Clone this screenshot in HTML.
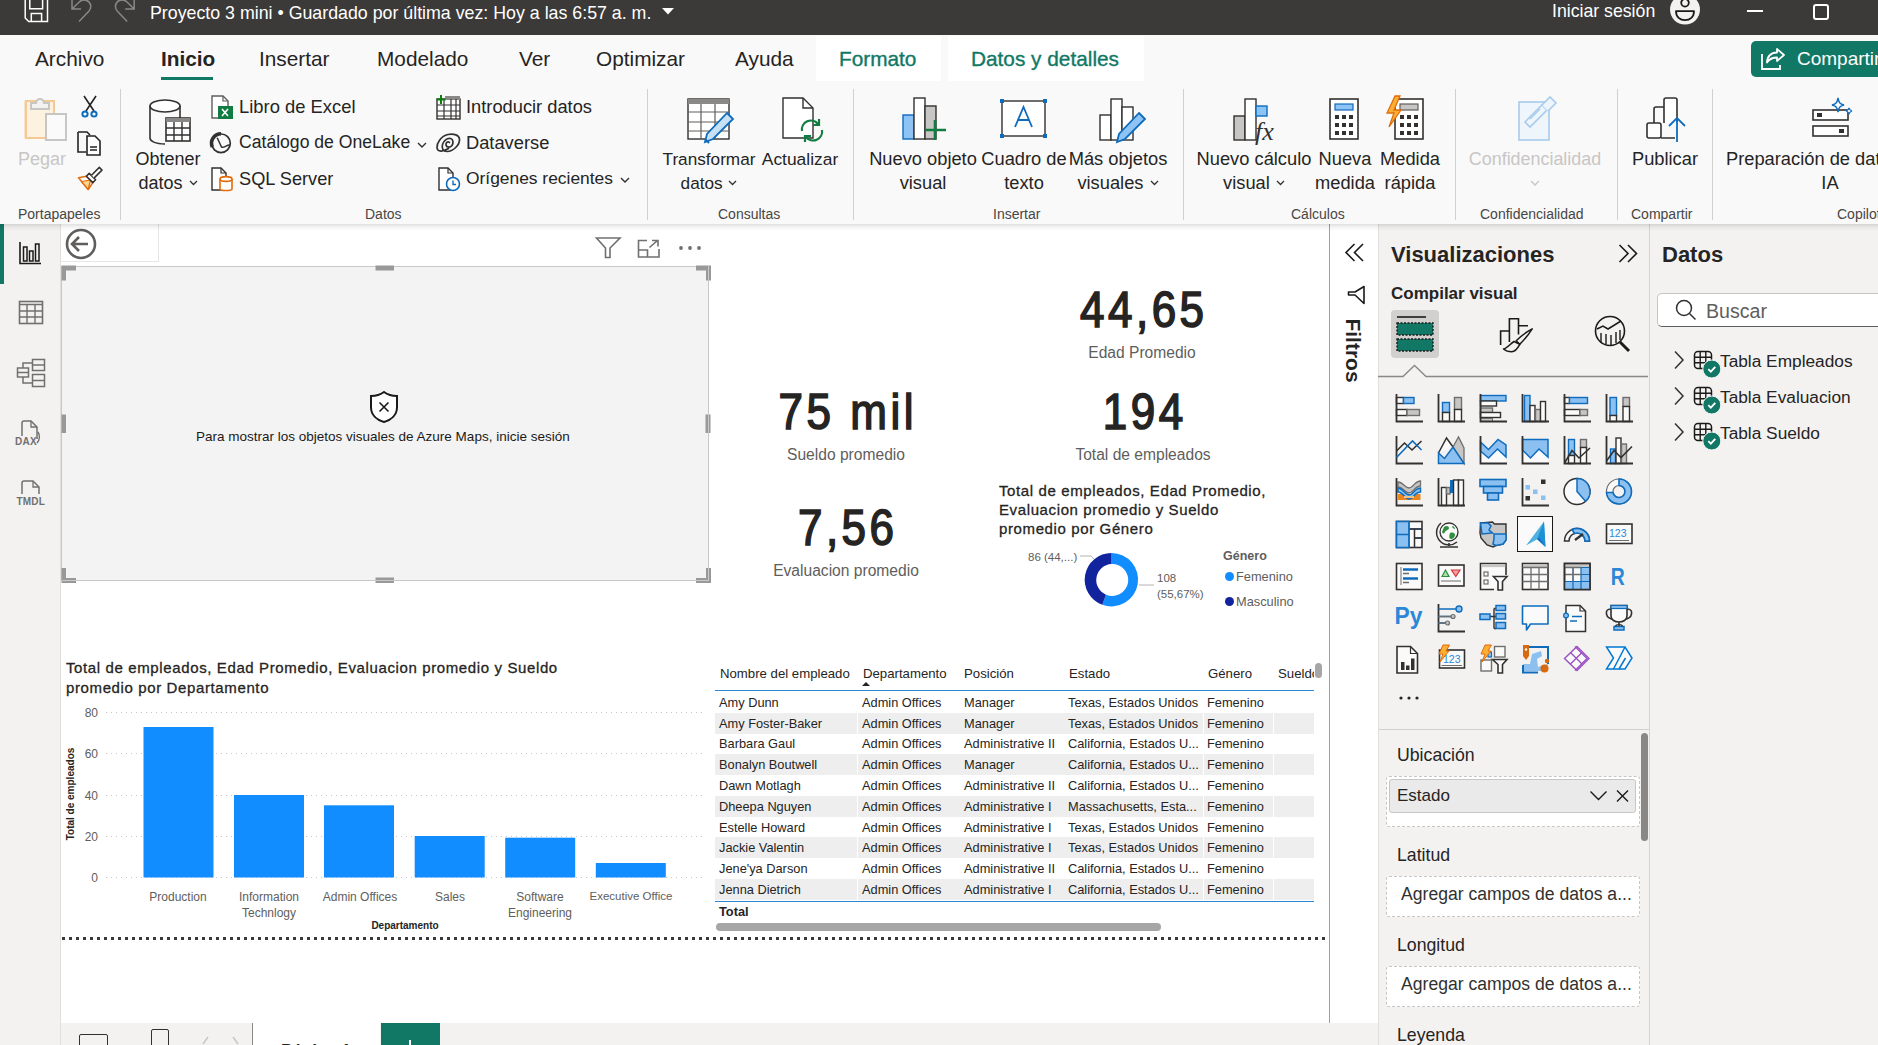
<!DOCTYPE html>
<html><head><meta charset="utf-8">
<style>
*{box-sizing:border-box;margin:0;padding:0}
html,body{width:1878px;height:1045px;overflow:hidden;background:#fff;font-family:"Liberation Sans",sans-serif;color:#252423}
.a{position:absolute}
.t{position:absolute;white-space:nowrap;line-height:1}
svg{position:absolute;overflow:visible}
#title{left:0;top:0;width:1878px;height:35px;background:#3b3a39}
#tabs{left:0;top:35px;width:1878px;height:53px;background:#f9f9f9}
#ribbon{left:0;top:88px;width:1878px;height:136px;background:#f9f9f9}
#leftnav{left:0;top:224px;width:61px;height:821px;background:#f3f2f1;border-right:1px solid #e1dfdd}
#canvas{left:61px;top:224px;width:1269px;height:799px;background:#fff}
#pagebar{left:61px;top:1023px;width:1317px;height:22px;background:#f3f2f1}
#filters{left:1329px;top:224px;width:49px;height:799px;background:#fff;border-left:1px solid #a19f9d}
#viz{left:1378px;top:224px;width:271px;height:821px;background:#f3f2f1;border-left:1px solid #e1dfdd}
#datos{left:1649px;top:224px;width:229px;height:821px;background:#f3f2f1;border-left:1px solid #d6d4d2}
.tab{position:absolute;top:49px;font-size:20.8px;color:#252423;line-height:1}
.sep{position:absolute;top:89px;width:1px;height:131px;background:#d2d0ce}
.grp{position:absolute;top:207px;font-size:14px;color:#484644;line-height:1;white-space:nowrap}
.rb{position:absolute;font-size:18px;color:#252423;line-height:24px;text-align:center;white-space:nowrap}
.rs{position:absolute;font-size:18px;color:#252423;line-height:1;white-space:nowrap}

.kpi{font-size:50px;color:#252423;letter-spacing:4px;padding-left:4px;-webkit-text-stroke:1.6px #252423;transform:scaleX(0.88)}
.klab{font-size:15.6px;color:#605e5c;margin-top:1.5px}
.vt{font-size:15px;font-weight:normal;letter-spacing:0.62px;-webkit-text-stroke:0.3px #252423;color:#252423;white-space:nowrap}
.dl{font-size:11.5px;color:#605e5c}
.ax{font-size:12px;color:#605e5c;margin-top:1px}

.td{font-size:12.8px;color:#252423}
.th{font-size:13.2px;color:#252423}

.well{font-size:17.7px;color:#252423;margin-top:1.5px}
</style></head><body>
<!-- TITLE BAR -->
<div id="title" class="a"></div>
<div class="t" style="left:150px;top:5px;font-size:17.8px;color:#fff">Proyecto 3 mini • Guardado por última vez: Hoy a las 6:57 a. m.</div>
<div class="t" style="left:1552px;top:3px;font-size:17.7px;color:#fff">Iniciar sesión</div>
<svg style="left:0;top:0" width="200" height="35" viewBox="0 0 200 35">
 <path d="M25.2 -2V18L28.7 21.5H47.5V-2M29.8 -2V8.8H42.6V-2M31.3 21.5V13.5H41.6V21.5" fill="none" stroke="#fff" stroke-width="1.5"/>
 <path d="M72 -1V9H81M72 9L79.5 1.8A6.6 6.6 0 0 1 88.8 11.2L79 21.5" fill="none" stroke="#8a8886" stroke-width="1.5"/>
 <path d="M134.2 -1V9H125.2M134.2 9L126.7 1.8A6.6 6.6 0 0 0 117.4 11.2L127.2 21.5" fill="none" stroke="#8a8886" stroke-width="1.5"/>
</svg>
<svg style="left:661px;top:7px" width="14" height="8" viewBox="0 0 14 8"><path d="M1 1h12L7 7.5z" fill="#fff"/></svg>
<svg style="left:1669px;top:0" width="32" height="27" viewBox="0 0 32 27">
 <circle cx="16" cy="9.6" r="15" fill="#f3f2f1"/>
 <circle cx="16" cy="2.8" r="3.8" fill="none" stroke="#1b1a19" stroke-width="1.8"/>
 <path d="M7 11.2H25C25 17 21 20.2 16 20.2S7 17 7 11.2z" fill="none" stroke="#1b1a19" stroke-width="1.8" stroke-linejoin="round"/>
</svg>
<div class="a" style="left:1747px;top:10.2px;width:16px;height:1.6px;background:#fff"></div>
<div class="a" style="left:1813px;top:4px;width:16px;height:16px;border:2px solid #fff;border-radius:3px"></div>


<!-- TABS -->
<div id="tabs" class="a"></div>
<div class="a" style="left:816px;top:36px;width:125px;height:45px;background:#fff"></div>
<div class="a" style="left:948px;top:36px;width:196px;height:45px;background:#fff"></div>
<div class="tab" style="left:35px">Archivo</div>
<div class="tab" style="left:161px;font-weight:bold">Inicio</div>
<div class="a" style="left:161px;top:77px;width:52px;height:3px;background:#117865"></div>
<div class="tab" style="left:259px">Insertar</div>
<div class="tab" style="left:377px">Modelado</div>
<div class="tab" style="left:519px">Ver</div>
<div class="tab" style="left:596px">Optimizar</div>
<div class="tab" style="left:735px">Ayuda</div>
<div class="tab" style="left:839px;color:#117865;-webkit-text-stroke:0.35px #117865">Formato</div>
<div class="tab" style="left:971px;color:#117865;-webkit-text-stroke:0.35px #117865">Datos y detalles</div>
<div class="a" style="left:1751px;top:41px;width:140px;height:36px;background:#117865;border-radius:5px"></div>
<div class="t" style="left:1797px;top:49px;font-size:19px;color:#fff">Compartir</div>
<svg style="left:1760px;top:47px" width="26" height="24" viewBox="0 0 26 24">
 <path d="M2 7v15h18v-4" fill="none" stroke="#fff" stroke-width="1.8"/>
 <path d="M17 2l7 6-7 6v-3.5c-5 0-8 2-10 5 0-6 4-10 10-10z" fill="none" stroke="#fff" stroke-width="1.8" stroke-linejoin="round"/>
</svg>


<!-- RIBBON -->
<div id="ribbon" class="a"></div>
<div class="sep" style="left:120px"></div>
<div class="sep" style="left:647px"></div>
<div class="sep" style="left:853px"></div>
<div class="sep" style="left:1183px"></div>
<div class="sep" style="left:1455px"></div>
<div class="sep" style="left:1617px"></div>
<div class="sep" style="left:1712px"></div>
<div class="grp" style="left:18px">Portapapeles</div>
<div class="grp" style="left:365px">Datos</div>
<div class="grp" style="left:718px">Consultas</div>
<div class="grp" style="left:993px">Insertar</div>
<div class="grp" style="left:1291px">Cálculos</div>
<div class="grp" style="left:1480px">Confidencialidad</div>
<div class="grp" style="left:1631px">Compartir</div>
<div class="grp" style="left:1837px">Copilot</div>


<!-- RIBBON CONTENT -->
<!-- Pegar -->
<svg style="left:24px;top:97px" width="44" height="48" viewBox="0 0 44 48">
 <path d="M1.5 4.5h8v36h-8z" fill="#fdf3e3" stroke="#f5cfa0" stroke-width="2"/>
 <rect x="2" y="4" width="28" height="37" fill="#fdf1df" stroke="#f4c994" stroke-width="2"/>
 <path d="M7 12v-6h5a4 4 0 0 1 8 0h5v6z" fill="#f3f2f1" stroke="#c8c6c4" stroke-width="2"/>
 <rect x="22" y="17" width="20" height="26" fill="#fafafa" stroke="#c8c6c4" stroke-width="2"/>
</svg>
<div class="rb" style="left:12px;top:147px;width:60px;font-size:18px;color:#c8c6c4">Pegar</div>
<!-- cut -->
<svg style="left:80px;top:95px" width="20" height="24" viewBox="0 0 20 24">
 <path d="M4 1l10 15M16 1L6 16" stroke="#252423" stroke-width="1.6" fill="none"/>
 <circle cx="5" cy="19" r="2.6" fill="#fff" stroke="#0f6cbd" stroke-width="2"/>
 <circle cx="14" cy="19" r="2.6" fill="#fff" stroke="#0f6cbd" stroke-width="2"/>
</svg>
<!-- copy -->
<svg style="left:77px;top:131px" width="26" height="25" viewBox="0 0 26 25">
 <path d="M1 1h9l3 3v-0M1 1v20h8" stroke="#252423" stroke-width="1.6" fill="none"/>
 <path d="M10 5h8l5 5v14H10z" fill="#fff" stroke="#252423" stroke-width="1.6"/>
 <path d="M13 16h7M13 19h7" stroke="#252423" stroke-width="1.4"/>
</svg>
<!-- painter -->
<svg style="left:77px;top:166px" width="26" height="25" viewBox="0 0 26 25">
 <path d="M9.4 10.2L1.5 11.8 11.2 23.5 15.8 16.6z" fill="#fff" stroke="#e26b0a" stroke-width="1.5" stroke-linejoin="round"/>
 <path d="M4.5 15.5L13.5 14 11.2 23.5z" fill="#fcd48a" stroke="#e26b0a" stroke-width="1.2" stroke-linejoin="round"/>
 <path d="M9.4 10.2L12.2 7.4 18.6 13.8 15.8 16.6z" fill="#fff" stroke="#323130" stroke-width="1.5" stroke-linejoin="round"/>
 <path d="M14.5 9.2L22.3 1.4 25 4.1 17.2 11.9" fill="#fff" stroke="#323130" stroke-width="1.5" stroke-linejoin="round"/>
</svg>
<!-- Obtener datos -->
<svg style="left:149px;top:98px" width="46" height="48" viewBox="0 0 46 48">
 <ellipse cx="16" cy="8" rx="15" ry="6" fill="#fff" stroke="#323130" stroke-width="1.6"/>
 <path d="M1 8v32c0 3 5 6 15 6M31 8v12" stroke="#323130" stroke-width="1.6" fill="none"/>
 <rect x="17" y="20" width="24" height="23" fill="#fff" stroke="#323130" stroke-width="1.6"/>
 <rect x="17" y="20" width="24" height="4" fill="#8a8886"/>
 <path d="M17 30h24M17 37h24M25 24v19M33 24v19" stroke="#323130" stroke-width="1.4"/>
</svg>
<div class="rb" style="left:128px;top:147px;width:80px;font-size:18px">Obtener</div>
<div class="rb" style="left:128px;top:171px;width:80px;font-size:18px">datos <svg style="position:relative;display:inline-block;vertical-align:middle;margin-left:1px;top:-1px" width="9" height="6" viewBox="0 0 9 6"><path d="M1 1l3.5 3.5L8 1" stroke="#323130" stroke-width="1.3" fill="none"/></svg></div>
<!-- Excel -->
<svg style="left:211px;top:95px" width="23" height="25" viewBox="0 0 23 25">
 <path d="M1 1h11l5 5v17H1z" fill="#fff" stroke="#605e5c" stroke-width="1.4"/>
 <path d="M12 1v5h5" fill="none" stroke="#605e5c" stroke-width="1.2"/>
 <rect x="7" y="11" width="15" height="13" fill="#107c41"/>
 <path d="M11 14l6 7M17 14l-6 7" stroke="#fff" stroke-width="1.6"/>
</svg>
<div class="rs" style="left:239px;top:98px;font-size:18.4px">Libro de Excel</div>
<!-- OneLake -->
<svg style="left:210px;top:132px" width="23" height="23" viewBox="0 0 23 23">
 <circle cx="11" cy="11.3" r="9.3" fill="none" stroke="#323130" stroke-width="1.7"/>
 <path d="M2.3 15A9.5 9.5 0 0 1 11 1.8" fill="none" stroke="#323130" stroke-width="3.6"/>
 <path d="M7.2 5.8L11.5 15C14 16.5 16.5 12.5 20.3 13" fill="none" stroke="#323130" stroke-width="1.5"/>
</svg>
<div class="rs" style="left:239px;top:134px;font-size:17.6px">Catálogo de OneLake</div>
<svg style="left:417px;top:142px" width="10" height="6" viewBox="0 0 10 6"><path d="M1 1l4 4 4-4" stroke="#323130" stroke-width="1.4" fill="none"/></svg>
<!-- SQL -->
<svg style="left:211px;top:167px" width="23" height="25" viewBox="0 0 23 25">
 <path d="M1 1h9l5 5v17H1z" fill="#fff" stroke="#323130" stroke-width="1.4"/>
 <path d="M10 1v5h5" fill="none" stroke="#323130" stroke-width="1.2"/>
 <path d="M9 12v10c0 2 12 2 12 0V12" fill="#fff" stroke="#e26b0a" stroke-width="1.6"/>
 <ellipse cx="15" cy="12" rx="6" ry="2.4" fill="#fff" stroke="#e26b0a" stroke-width="1.6"/>
</svg>
<div class="rs" style="left:239px;top:170px;font-size:18.2px">SQL Server</div>
<!-- Introducir datos -->
<svg style="left:436px;top:95px" width="25" height="25" viewBox="0 0 25 25">
 <rect x="1" y="4" width="23" height="20" fill="#fff" stroke="#323130" stroke-width="1.4"/>
 <rect x="9" y="1" width="15" height="4" fill="#8a8886"/>
 <path d="M1 10h23M1 16h23M1 21h23M8 4v20M15 4v20M20 4v20" stroke="#323130" stroke-width="1.2"/>
 <path d="M5 0v9M0.5 4.5h9" stroke="#107c10" stroke-width="2" />
</svg>
<div class="rs" style="left:466px;top:98px;font-size:18.3px">Introducir datos</div>
<!-- Dataverse -->
<svg style="left:436px;top:133px" width="25" height="21" viewBox="0 0 25 21">
 <path d="M12.5 15.5C7 19 1.5 19 1 15 0.5 10 5 3 12 1.5 18 0.5 23 2 23.5 6 24 12 17 18.5 11 18.5 7 18.5 5.5 15 6.5 11.5 7.5 7.5 11 5 14.5 5.5 17.5 6.5 17.5 10 16 12.5 14 15 10.5 14.5 10 12 9.5 9.5 12 8 13.5 9.5" fill="none" stroke="#323130" stroke-width="1.7" stroke-linecap="round"/>
</svg>
<div class="rs" style="left:466px;top:134px;font-size:18.3px">Dataverse</div>
<!-- Orígenes recientes -->
<svg style="left:438px;top:167px" width="24" height="25" viewBox="0 0 24 25">
 <path d="M1 1h9l5 5v17H1z" fill="#fff" stroke="#323130" stroke-width="1.4"/>
 <path d="M10 1v5h5" fill="none" stroke="#323130" stroke-width="1.2"/>
 <circle cx="15" cy="17" r="6.5" fill="#fff" stroke="#0f6cbd" stroke-width="1.6"/>
 <path d="M15 13.5v4h3" stroke="#0f6cbd" stroke-width="1.4" fill="none"/>
</svg>
<div class="rs" style="left:466px;top:170px;font-size:17.4px">Orígenes recientes</div>
<svg style="left:620px;top:177px" width="10" height="6" viewBox="0 0 10 6"><path d="M1 1l4 4 4-4" stroke="#323130" stroke-width="1.4" fill="none"/></svg>
<!-- Transformar datos -->
<svg style="left:687px;top:98px" width="48" height="47" viewBox="0 0 48 47">
 <rect x="1" y="1" width="41" height="40" fill="#fff" stroke="#323130" stroke-width="1.4"/>
 <rect x="1" y="1" width="41" height="5" fill="#8a8886"/>
 <path d="M1 14h41M1 24h41M1 33h41M14 6v35M28 6v35" stroke="#605e5c" stroke-width="1.2"/>
 <path d="M40 15l6 6-20 20-8 3 2-8z" fill="#c7e0f4" stroke="#0f6cbd" stroke-width="1.8"/>
 <path d="M18 41l4 4" stroke="#0f6cbd" stroke-width="2"/>
</svg>
<div class="rb" style="left:659px;top:147px;width:100px;font-size:17.2px">Transformar</div>
<div class="rb" style="left:659px;top:171px;width:100px;font-size:17.2px">datos <svg style="position:relative;display:inline-block;vertical-align:middle;margin-left:1px;top:-1px" width="9" height="6" viewBox="0 0 9 6"><path d="M1 1l3.5 3.5L8 1" stroke="#323130" stroke-width="1.3" fill="none"/></svg></div>
<!-- Actualizar -->
<svg style="left:782px;top:97px" width="46" height="48" viewBox="0 0 46 48">
 <path d="M1 1h20l10 10v30H1z" fill="#fff" stroke="#323130" stroke-width="1.4"/>
 <path d="M21 1v10h10" fill="none" stroke="#323130" stroke-width="1.4"/>
 <path d="M20 34a9 9 0 0 1 16-7M40 33a9 9 0 0 1-16 7" fill="none" stroke="#107c41" stroke-width="2.2"/>
 <path d="M37 22v6h-6M23 45v-6h6" fill="none" stroke="#107c41" stroke-width="2.2"/>
</svg>
<div class="rb" style="left:755px;top:147px;width:90px;font-size:17.4px">Actualizar</div>
<!-- Nuevo objeto visual -->
<svg style="left:902px;top:97px" width="46" height="46" viewBox="0 0 46 46">
 <rect x="1" y="18" width="11" height="24" fill="#8ec3f5" stroke="#0f6cbd" stroke-width="1.4"/>
 <rect x="12" y="1" width="11" height="41" fill="#fff" stroke="#323130" stroke-width="1.4"/>
 <rect x="23" y="9" width="11" height="33" fill="#c8c6c4" stroke="#323130" stroke-width="1.4"/>
 <path d="M33 23v20M23 33h21" stroke="#107c41" stroke-width="2.6"/>
</svg>
<div class="rb" style="left:863px;top:147px;width:120px;font-size:18.3px">Nuevo objeto</div>
<div class="rb" style="left:863px;top:171px;width:120px;font-size:18.3px">visual</div>
<!-- Cuadro de texto -->
<svg style="left:1000px;top:99px" width="48" height="40" viewBox="0 0 48 40">
 <rect x="2" y="2" width="43" height="35" fill="#fff" stroke="#323130" stroke-width="1.4"/>
 <rect x="0" y="0" width="4" height="4" fill="#0f6cbd"/><rect x="43" y="0" width="4" height="4" fill="#0f6cbd"/>
 <rect x="0" y="35" width="4" height="4" fill="#0f6cbd"/><rect x="43" y="35" width="4" height="4" fill="#0f6cbd"/>
 <path d="M15 28l8.5-20 8.5 20M18 21h11" fill="none" stroke="#0f6cbd" stroke-width="1.8"/>
</svg>
<div class="rb" style="left:974px;top:147px;width:100px;font-size:18.3px">Cuadro de</div>
<div class="rb" style="left:974px;top:171px;width:100px;font-size:18.3px">texto</div>
<!-- Más objetos visuales -->
<svg style="left:1099px;top:98px" width="46" height="48" viewBox="0 0 46 48">
 <rect x="1" y="17" width="11" height="25" fill="#fff" stroke="#323130" stroke-width="1.4"/>
 <rect x="12" y="1" width="11" height="41" fill="#fff" stroke="#323130" stroke-width="1.4"/>
 <rect x="23" y="9" width="11" height="33" fill="#fff" stroke="#323130" stroke-width="1.4"/>
 <path d="M40 15l6 6-20 20-8 3 2-8z" fill="#8ec3f5" stroke="#0f6cbd" stroke-width="1.8"/>
</svg>
<div class="rb" style="left:1063px;top:147px;width:110px;font-size:18.3px">Más objetos</div>
<div class="rb" style="left:1063px;top:171px;width:110px;font-size:18.3px">visuales <svg style="position:relative;display:inline-block;vertical-align:middle;margin-left:1px;top:-1px" width="9" height="6" viewBox="0 0 9 6"><path d="M1 1l3.5 3.5L8 1" stroke="#323130" stroke-width="1.3" fill="none"/></svg></div>
<!-- Nuevo calculo visual -->
<svg style="left:1233px;top:98px" width="46" height="46" viewBox="0 0 46 46">
 <rect x="1" y="18" width="11" height="24" fill="#c8c6c4" stroke="#323130" stroke-width="1.4"/>
 <rect x="12" y="1" width="11" height="41" fill="#fff" stroke="#323130" stroke-width="1.4"/>
 <rect x="23" y="8" width="11" height="10" fill="#8ec3f5" stroke="#0f6cbd" stroke-width="1.4"/>
 <text x="22" y="42" font-family="Liberation Serif" font-style="italic" font-size="26" fill="#323130">fx</text>
</svg>
<div class="rb" style="left:1191px;top:147px;width:126px;font-size:18.3px">Nuevo cálculo</div>
<div class="rb" style="left:1191px;top:171px;width:126px;font-size:18.3px">visual <svg style="position:relative;display:inline-block;vertical-align:middle;margin-left:1px;top:-1px" width="9" height="6" viewBox="0 0 9 6"><path d="M1 1l3.5 3.5L8 1" stroke="#323130" stroke-width="1.3" fill="none"/></svg></div>
<!-- Nueva medida -->
<svg style="left:1329px;top:98px" width="31" height="42" viewBox="0 0 31 42">
 <rect x="1" y="1" width="28" height="40" fill="#fff" stroke="#323130" stroke-width="1.6"/>
 <rect x="6" y="6" width="18" height="6" fill="#8ec3f5" stroke="#0f6cbd" stroke-width="1.2"/>
 <g fill="#323130"><rect x="6" y="17" width="4" height="4"/><rect x="13" y="17" width="4" height="4"/><rect x="20" y="17" width="4" height="4"/><rect x="6" y="25" width="4" height="4"/><rect x="13" y="25" width="4" height="4"/><rect x="20" y="25" width="4" height="4"/><rect x="6" y="33" width="4" height="4"/><rect x="13" y="33" width="4" height="4"/><rect x="20" y="33" width="4" height="4"/></g>
</svg>
<div class="rb" style="left:1310px;top:147px;width:70px;font-size:18.3px">Nueva</div>
<div class="rb" style="left:1310px;top:171px;width:70px;font-size:18.3px">medida</div>
<!-- Medida rapida -->
<svg style="left:1385px;top:95px" width="40" height="46" viewBox="0 0 40 46">
 <rect x="10" y="4" width="28" height="40" fill="#fff" stroke="#323130" stroke-width="1.6"/>
 <rect x="15" y="9" width="18" height="6" fill="#c8c6c4" stroke="#605e5c" stroke-width="1.2"/>
 <g fill="#323130"><rect x="15" y="20" width="4" height="4"/><rect x="22" y="20" width="4" height="4"/><rect x="29" y="20" width="4" height="4"/><rect x="15" y="28" width="4" height="4"/><rect x="22" y="28" width="4" height="4"/><rect x="29" y="28" width="4" height="4"/><rect x="15" y="36" width="4" height="4"/><rect x="22" y="36" width="4" height="4"/><rect x="29" y="36" width="4" height="4"/></g>
 <path d="M10 1L2 18h7l-5 14 12-17H9l6-14z" fill="#fbb034" stroke="#e26b0a" stroke-width="1.3"/>
</svg>
<div class="rb" style="left:1370px;top:147px;width:80px;font-size:18.3px">Medida</div>
<div class="rb" style="left:1370px;top:171px;width:80px;font-size:18.3px">rápida</div>
<!-- Confidencialidad -->
<svg style="left:1518px;top:95px" width="44" height="46" viewBox="0 0 44 46">
 <rect x="1" y="7" width="30" height="38" fill="#eef5fb" stroke="#a7cbed" stroke-width="1.6"/>
 <path d="M7 27l17-17 5 5-17 17z" fill="none" stroke="#a7cbed" stroke-width="1.6"/>
 <path d="M24 10l8-8 6 6-8 8" fill="#eef5fb" stroke="#a7cbed" stroke-width="1.6"/>
 <path d="M12 24l10-10" stroke="#a7cbed" stroke-width="1.4"/>
</svg>
<div class="rb" style="left:1460px;top:147px;width:150px;font-size:17.9px;color:#c8c6c4">Confidencialidad</div>
<svg style="left:1530px;top:180px" width="10" height="6" viewBox="0 0 10 6"><path d="M1 1l4 4 4-4" stroke="#c8c6c4" stroke-width="1.4" fill="none"/></svg>
<!-- Publicar -->
<svg style="left:1646px;top:97px" width="44" height="46" viewBox="0 0 44 46">
 <rect x="1" y="26" width="14" height="15" rx="2" fill="#fff" stroke="#323130" stroke-width="1.6"/>
 <path d="M8 26V12a2 2 0 0 1 2-2h8M15 41h14" fill="none" stroke="#323130" stroke-width="1.6"/>
 <path d="M18 26V3a2 2 0 0 1 2-2h9a2 2 0 0 1 2 2v22" fill="#fff" stroke="#323130" stroke-width="1.6"/>
 <path d="M31 45V21M23 29l8-8 8 8" fill="none" stroke="#0f6cbd" stroke-width="1.8"/>
</svg>
<div class="rb" style="left:1625px;top:147px;width:80px;font-size:18.3px">Publicar</div>
<!-- Preparación IA -->
<svg style="left:1812px;top:97px" width="42" height="40" viewBox="0 0 42 40">
 <rect x="1" y="13" width="35" height="10" fill="#fff" stroke="#323130" stroke-width="1.6"/>
 <rect x="1" y="29" width="35" height="10" fill="#fff" stroke="#323130" stroke-width="1.6"/>
 <rect x="5" y="16" width="5" height="4" fill="#323130"/><rect x="27" y="32" width="5" height="4" fill="#323130"/>
 <path d="M26 1c1 5 2 6 6 7-4 1-5 2-6 7-1-5-2-6-6-7 4-1 5-2 6-7z" fill="#fff" stroke="#0f6cbd" stroke-width="1.4"/>
 <path d="M37 11c.5 2 1 2.5 3 3-2 .5-2.5 1-3 3-.5-2-1-2.5-3-3 2-.5 2.5-1 3-3z" fill="#fff" stroke="#0f6cbd" stroke-width="1.2"/>
</svg>
<div class="rs" style="left:1726px;top:150px;font-size:18.3px">Preparación de datos para</div>
<div class="rb" style="left:1810px;top:171px;width:40px;font-size:18.3px">IA</div>

<!-- LEFT NAV -->
<div id="leftnav" class="a"></div>
<div class="a" style="left:0;top:224px;width:4px;height:60px;background:#117865"></div>
<svg style="left:19px;top:242px" width="24" height="23" viewBox="0 0 24 23">
 <path d="M1 0v21.5h21" fill="none" stroke="#1b1a19" stroke-width="1.6"/>
 <rect x="4.5" y="5" width="3.5" height="14" fill="none" stroke="#1b1a19" stroke-width="1.5"/>
 <rect x="10.5" y="9" width="3.5" height="10" fill="none" stroke="#1b1a19" stroke-width="1.5"/>
 <rect x="16.5" y="2" width="3.5" height="17" fill="none" stroke="#1b1a19" stroke-width="1.5"/>
</svg>
<svg style="left:18px;top:300px" width="26" height="25" viewBox="0 0 26 25">
 <rect x="1.5" y="1.5" width="23" height="22" fill="none" stroke="#707070" stroke-width="1.6"/>
 <path d="M1.5 4.5h23M1.5 11h23M1.5 17h23M9 4.5v19M17 4.5v19" stroke="#707070" stroke-width="1.4"/>
</svg>
<svg style="left:16px;top:358px" width="30" height="30" viewBox="0 0 30 30">
 <g fill="none" stroke="#707070" stroke-width="1.5">
  <rect x="1.5" y="10" width="11" height="9"/><path d="M1.5 14.5h11"/>
  <rect x="16.5" y="1.5" width="12" height="11"/><path d="M16.5 7h12"/>
  <rect x="16.5" y="16.5" width="12" height="12"/><path d="M16.5 22.5h12"/>
  <path d="M7 10V5h9.5M7 19v6h9.5"/>
 </g>
</svg>
<svg style="left:14px;top:420px" width="30" height="28" viewBox="0 0 30 28">
 <path d="M8 16V3a2 2 0 0 1 2-2h7l6 6v12" fill="none" stroke="#707070" stroke-width="1.5"/>
 <path d="M17 1v6h6" fill="none" stroke="#707070" stroke-width="1.3"/>
 <path d="M24 12c2 3 2 8-1 11" fill="none" stroke="#707070" stroke-width="1.4"/>
 <text x="1" y="25" font-family="Liberation Sans" font-weight="bold" font-size="10" fill="#707070" letter-spacing="0.3">DAX</text>
</svg>
<svg style="left:16px;top:480px" width="30" height="28" viewBox="0 0 30 28">
 <path d="M6 14V3a2 2 0 0 1 2-2h9l6 6v7" fill="none" stroke="#707070" stroke-width="1.5"/>
 <path d="M17 1v6h6" fill="none" stroke="#707070" stroke-width="1.3"/>
 <text x="0.5" y="25" font-family="Liberation Sans" font-weight="bold" font-size="10" fill="#707070" letter-spacing="0.2">TMDL</text>
</svg>


<!-- CANVAS -->
<div id="canvas" class="a"></div>
<div id="pagebar" class="a"></div>

<!-- CANVAS CONTENT -->
<div class="a" style="left:61px;top:224px;width:98px;height:38px;border:1px solid #e6e6e6;border-top:none;border-left:none;background:#fff"></div>
<svg style="left:65px;top:228px" width="32" height="32" viewBox="0 0 32 32">
 <circle cx="16" cy="16" r="14" fill="none" stroke="#605e5c" stroke-width="2.6"/>
 <path d="M23 16H8M14 9l-7 7 7 7" fill="none" stroke="#605e5c" stroke-width="2.6"/>
</svg>
<!-- visual header -->
<svg style="left:595px;top:236px" width="27" height="24" viewBox="0 0 27 24">
 <path d="M1.5 2h23.5l-10 10v9.5h-4.5V12z" fill="none" stroke="#707070" stroke-width="1.6"/>
</svg>
<svg style="left:637px;top:239px" width="24" height="20" viewBox="0 0 24 20">
 <path d="M10 1.5H1.5v16.5h20.5V10M1.5 11h9v7" fill="none" stroke="#707070" stroke-width="1.6"/>
 <path d="M12.5 8.5l8-7M15 1.5h6v6" fill="none" stroke="#707070" stroke-width="1.6"/>
</svg>
<svg style="left:677px;top:244px" width="26" height="8" viewBox="0 0 26 8">
 <circle cx="4" cy="4" r="1.9" fill="#707070"/><circle cx="13" cy="4" r="1.9" fill="#707070"/><circle cx="22" cy="4" r="1.9" fill="#707070"/>
</svg>
<!-- map visual -->
<div class="a" style="left:61px;top:266px;width:648px;height:315px;background:#f3f3f3;border:1px solid #c8c8c8"></div>
<svg style="left:0;top:0" width="720" height="600" viewBox="0 0 720 600">
 <g fill="#999">
  <path d="M61.5 265.5h14.5v5h-10v10h-4.5z"/>
  <path d="M711 265.5h-15v5h10v10h5z"/>
  <path d="M61.5 583h14.5v-5h-10v-10h-4.5z"/>
  <path d="M711 583h-15v-5h10v-10h5z"/>
  <rect x="375.5" y="265.5" width="18.5" height="5"/>
  <rect x="375.5" y="577.5" width="18.5" height="5.5"/>
  <rect x="61.5" y="414.5" width="4.5" height="18.5"/>
  <rect x="705.5" y="414.5" width="5" height="18.5"/>
 </g>
 <path d="M61.5 580.5H709M708.5 266v315" stroke="#c8c8c8" stroke-width="1" fill="none"/>
</svg>
<svg style="left:368px;top:390px" width="32" height="34" viewBox="0 0 32 34">
 <path d="M16 2c4 3 8 4 13 4v11c0 8-6 13-13 15C9 30 3 25 3 17V6c5 0 9-1 13-4z" fill="#fff" stroke="#1b1a19" stroke-width="2"/>
 <path d="M11.5 12.5l9 9M20.5 12.5l-9 9" stroke="#1b1a19" stroke-width="1.6"/>
</svg>
<div class="t" style="left:196px;top:430px;font-size:13.5px;color:#1b1a19">Para mostrar los objetos visuales de Azure Maps, inicie sesión</div>

<!-- KPI cards -->
<div class="t kpi" style="left:1042px;top:285px;width:200px;text-align:center">44,65</div>
<div class="t klab" style="left:1042px;top:343px;width:200px;text-align:center">Edad Promedio</div>
<div class="t kpi" style="left:746px;top:387px;width:200px;text-align:center">75 mil</div>
<div class="t klab" style="left:746px;top:445px;width:200px;text-align:center">Sueldo promedio</div>
<div class="t kpi" style="left:1043px;top:387px;width:200px;text-align:center">194</div>
<div class="t klab" style="left:1043px;top:445px;width:200px;text-align:center">Total de empleados</div>
<div class="t kpi" style="left:746px;top:503px;width:200px;text-align:center">7,56</div>
<div class="t klab" style="left:746px;top:561px;width:200px;text-align:center">Evaluacion promedio</div>

<!-- donut -->
<div class="a vt" style="left:999px;top:481px;width:300px;line-height:19px">Total de empleados, Edad Promedio,<br>Evaluacion promedio y Sueldo<br>promedio por Género</div>
<svg style="left:1020px;top:545px" width="290" height="70" viewBox="1020 545 290 70">
 <path d="M1111.5 553 A26.7 26.7 0 1 1 1102.3 604.8 L1106 594.7 A16 16 0 1 0 1111.5 564z" fill="#118dff"/>
 <path d="M1102.3 604.8 A26.7 26.7 0 0 1 1111.5 553 L1111.5 564 A16 16 0 0 0 1106 594.7z" fill="#12239e"/>
 <path d="M1080 556h11l3 3" fill="none" stroke="#b3b3b3" stroke-width="1"/>
 <path d="M1139 585h15" fill="none" stroke="#b3b3b3" stroke-width="1"/>
 <circle cx="1229.5" cy="576.5" r="4.5" fill="#118dff"/>
 <circle cx="1229.5" cy="601.5" r="4.5" fill="#12239e"/>
</svg>
<div class="t dl" style="left:1028px;top:552px">86 (44,...)</div>
<div class="t dl" style="left:1157px;top:572.5px">108</div>
<div class="t dl" style="left:1157px;top:588.5px">(55,67%)</div>
<div class="t" style="left:1223px;top:550px;font-size:12.5px;font-weight:bold;color:#605e5c">Género</div>
<div class="t" style="left:1236px;top:571px;font-size:12.8px;color:#605e5c">Femenino</div>
<div class="t" style="left:1236px;top:596px;font-size:12.8px;color:#605e5c">Masculino</div>

<!-- bar chart -->
<div class="a vt" style="left:66px;top:658px;width:560px;line-height:20px">Total de empleados, Edad Promedio, Evaluacion promedio y Sueldo<br>promedio por Departamento</div>
<svg style="left:60px;top:700px" width="660" height="240" viewBox="60 700 660 240">
 <g stroke="#c8c8c8" stroke-width="1" stroke-dasharray="1 4">
  <path d="M106 712.5H703M106 753.5H703M106 795.5H703M106 836.5H703M106 877.5H703"/>
 </g>
 <g fill="#118dff">
  <rect x="143.5" y="727" width="70" height="150.5"/>
  <rect x="234" y="795" width="70" height="82.5"/>
  <rect x="324" y="805.3" width="70" height="72.2"/>
  <rect x="414.7" y="836" width="70" height="41.5"/>
  <rect x="505.2" y="837.7" width="70" height="39.8"/>
  <rect x="595.8" y="863" width="70" height="14.5"/>
 </g>
</svg>
<div class="t ax" style="left:70px;top:706px;width:28px;text-align:right">80</div>
<div class="t ax" style="left:70px;top:747px;width:28px;text-align:right">60</div>
<div class="t ax" style="left:70px;top:789px;width:28px;text-align:right">40</div>
<div class="t ax" style="left:70px;top:830px;width:28px;text-align:right">20</div>
<div class="t ax" style="left:70px;top:871px;width:28px;text-align:right">0</div>
<div class="t" style="left:-2px;top:789px;width:146px;text-align:center;font-size:10px;font-weight:bold;color:#252423;transform:rotate(-90deg)">Total de empleados</div>
<div class="t ax" style="left:128px;top:890px;width:100px;text-align:center">Production</div>
<div class="t ax" style="left:219px;top:888px;width:100px;text-align:center;line-height:16px">Information<br>Technlogy</div>
<div class="t ax" style="left:310px;top:890px;width:100px;text-align:center">Admin Offices</div>
<div class="t ax" style="left:400px;top:890px;width:100px;text-align:center">Sales</div>
<div class="t ax" style="left:490px;top:888px;width:100px;text-align:center;line-height:16px">Software<br>Engineering</div>
<div class="t ax" style="left:581px;top:890px;width:100px;text-align:center;font-size:11.5px">Executive Office</div>
<div class="t" style="left:355px;top:921px;width:100px;text-align:center;font-size:10px;font-weight:bold;color:#252423">Departamento</div>
<div class="a" style="left:62px;top:937px;width:1268px;height:3px;background:repeating-linear-gradient(90deg,#3b3a39 0 3px,transparent 3px 7px)"></div>


<!-- TABLE -->
<div class="t td" style="left:719px;top:697.0px">Amy Dunn</div>
<div class="t td" style="left:862px;top:697.0px">Admin Offices</div>
<div class="t td" style="left:964px;top:697.0px">Manager</div>
<div class="t td" style="left:1068px;top:697.0px">Texas, Estados Unidos</div>
<div class="t td" style="left:1207px;top:697.0px">Femenino</div>
<div class="a" style="left:715px;top:712.5px;width:599px;height:21px;background:#eeeeee"></div>
<div class="a" style="left:857px;top:712.5px;width:1px;height:21px;background:#fff"></div>
<div class="a" style="left:1203px;top:712.5px;width:1px;height:21px;background:#fff"></div>
<div class="a" style="left:1273px;top:712.5px;width:1px;height:21px;background:#fff"></div>
<div class="t td" style="left:719px;top:717.5px">Amy Foster-Baker</div>
<div class="t td" style="left:862px;top:717.5px">Admin Offices</div>
<div class="t td" style="left:964px;top:717.5px">Manager</div>
<div class="t td" style="left:1068px;top:717.5px">Texas, Estados Unidos</div>
<div class="t td" style="left:1207px;top:717.5px">Femenino</div>
<div class="t td" style="left:719px;top:738.3px">Barbara Gaul</div>
<div class="t td" style="left:862px;top:738.3px">Admin Offices</div>
<div class="t td" style="left:964px;top:738.3px">Administrative II</div>
<div class="t td" style="left:1068px;top:738.3px">California, Estados U...</div>
<div class="t td" style="left:1207px;top:738.3px">Femenino</div>
<div class="a" style="left:715px;top:754.0px;width:599px;height:21px;background:#eeeeee"></div>
<div class="a" style="left:857px;top:754.0px;width:1px;height:21px;background:#fff"></div>
<div class="a" style="left:1203px;top:754.0px;width:1px;height:21px;background:#fff"></div>
<div class="a" style="left:1273px;top:754.0px;width:1px;height:21px;background:#fff"></div>
<div class="t td" style="left:719px;top:759.0px">Bonalyn Boutwell</div>
<div class="t td" style="left:862px;top:759.0px">Admin Offices</div>
<div class="t td" style="left:964px;top:759.0px">Manager</div>
<div class="t td" style="left:1068px;top:759.0px">California, Estados U...</div>
<div class="t td" style="left:1207px;top:759.0px">Femenino</div>
<div class="t td" style="left:719px;top:780.0px">Dawn Motlagh</div>
<div class="t td" style="left:862px;top:780.0px">Admin Offices</div>
<div class="t td" style="left:964px;top:780.0px">Administrative II</div>
<div class="t td" style="left:1068px;top:780.0px">California, Estados U...</div>
<div class="t td" style="left:1207px;top:780.0px">Femenino</div>
<div class="a" style="left:715px;top:795.8px;width:599px;height:21px;background:#eeeeee"></div>
<div class="a" style="left:857px;top:795.8px;width:1px;height:21px;background:#fff"></div>
<div class="a" style="left:1203px;top:795.8px;width:1px;height:21px;background:#fff"></div>
<div class="a" style="left:1273px;top:795.8px;width:1px;height:21px;background:#fff"></div>
<div class="t td" style="left:719px;top:800.8px">Dheepa Nguyen</div>
<div class="t td" style="left:862px;top:800.8px">Admin Offices</div>
<div class="t td" style="left:964px;top:800.8px">Administrative I</div>
<div class="t td" style="left:1068px;top:800.8px">Massachusetts, Esta...</div>
<div class="t td" style="left:1207px;top:800.8px">Femenino</div>
<div class="t td" style="left:719px;top:821.5px">Estelle Howard</div>
<div class="t td" style="left:862px;top:821.5px">Admin Offices</div>
<div class="t td" style="left:964px;top:821.5px">Administrative I</div>
<div class="t td" style="left:1068px;top:821.5px">Texas, Estados Unidos</div>
<div class="t td" style="left:1207px;top:821.5px">Femenino</div>
<div class="a" style="left:715px;top:837.2px;width:599px;height:21px;background:#eeeeee"></div>
<div class="a" style="left:857px;top:837.2px;width:1px;height:21px;background:#fff"></div>
<div class="a" style="left:1203px;top:837.2px;width:1px;height:21px;background:#fff"></div>
<div class="a" style="left:1273px;top:837.2px;width:1px;height:21px;background:#fff"></div>
<div class="t td" style="left:719px;top:842.2px">Jackie Valentin</div>
<div class="t td" style="left:862px;top:842.2px">Admin Offices</div>
<div class="t td" style="left:964px;top:842.2px">Administrative I</div>
<div class="t td" style="left:1068px;top:842.2px">Texas, Estados Unidos</div>
<div class="t td" style="left:1207px;top:842.2px">Femenino</div>
<div class="t td" style="left:719px;top:863.0px">Jene'ya Darson</div>
<div class="t td" style="left:862px;top:863.0px">Admin Offices</div>
<div class="t td" style="left:964px;top:863.0px">Administrative II</div>
<div class="t td" style="left:1068px;top:863.0px">California, Estados U...</div>
<div class="t td" style="left:1207px;top:863.0px">Femenino</div>
<div class="a" style="left:715px;top:878.7px;width:599px;height:21px;background:#eeeeee"></div>
<div class="a" style="left:857px;top:878.7px;width:1px;height:21px;background:#fff"></div>
<div class="a" style="left:1203px;top:878.7px;width:1px;height:21px;background:#fff"></div>
<div class="a" style="left:1273px;top:878.7px;width:1px;height:21px;background:#fff"></div>
<div class="t td" style="left:719px;top:883.7px">Jenna Dietrich</div>
<div class="t td" style="left:862px;top:883.7px">Admin Offices</div>
<div class="t td" style="left:964px;top:883.7px">Administrative I</div>
<div class="t td" style="left:1068px;top:883.7px">California, Estados U...</div>
<div class="t td" style="left:1207px;top:883.7px">Femenino</div>
<div class="t th" style="left:720px;top:667px">Nombre del empleado</div>
<div class="t th" style="left:863px;top:667px">Departamento</div>
<div class="t th" style="left:964px;top:667px">Posición</div>
<div class="t th" style="left:1069px;top:667px">Estado</div>
<div class="t th" style="left:1208px;top:667px">Género</div>
<div class="a" style="left:1278px;top:667px;width:36px;height:16px;overflow:hidden"><div class="t th" style="left:0;top:0">Sueldo</div></div>
<svg style="left:860px;top:681px" width="12" height="6" viewBox="0 0 12 6"><path d="M2 5l4-4 4 4z" fill="#252423"/></svg>
<div class="a" style="left:715px;top:690px;width:599px;height:1px;background:#2b88d8"></div>
<div class="a" style="left:715px;top:901px;width:599px;height:1px;background:#2b88d8"></div>
<div class="t" style="left:719px;top:906px;font-size:12.8px;font-weight:bold;color:#252423">Total</div>
<div class="a" style="left:716px;top:923px;width:445px;height:8px;border-radius:4px;background:#a6a6a6"></div>
<div class="a" style="left:1315px;top:663px;width:7px;height:15px;border-radius:3.5px;background:#a6a6a6"></div>

<!-- FILTERS -->
<div id="filters" class="a"></div>
<!-- VIZ -->
<div id="viz" class="a"></div>
<!-- DATOS -->
<div id="datos" class="a"></div>

<!-- FILTER PANE CONTENT -->
<svg style="left:1345px;top:243px" width="20" height="20" viewBox="0 0 20 20">
 <path d="M9.5 1L1 9.5 9.5 18M18 1L9.5 9.5 18 18" fill="none" stroke="#1b1a19" stroke-width="1.6"/>
</svg>
<svg style="left:1347px;top:285px" width="20" height="20" viewBox="0 0 20 20">
 <path d="M17 1.5v17L8 10H1.5V7H8z" fill="none" stroke="#1b1a19" stroke-width="1.6" stroke-linejoin="round"/>
</svg>
<div class="t" style="left:1318px;top:340px;width:70px;text-align:center;font-size:21px;font-weight:bold;color:#252423;transform:rotate(90deg)">Filtros</div>

<!-- VIZ PANE -->
<div class="t" style="left:1391px;top:243.5px;font-size:22px;font-weight:bold;color:#252423">Visualizaciones</div>
<svg style="left:1618px;top:244px" width="20" height="20" viewBox="0 0 20 20">
 <path d="M1.5 1L10 9.5 1.5 18M10 1l8.5 8.5L10 18" fill="none" stroke="#1b1a19" stroke-width="1.6"/>
</svg>
<div class="t" style="left:1391px;top:285px;font-size:17px;font-weight:bold;color:#252423">Compilar visual</div>
<div class="a" style="left:1391px;top:310px;width:48px;height:48px;background:#d2d0ce;border-radius:4px"></div>
<svg style="left:1396px;top:315px" width="40" height="40" viewBox="0 0 40 40">
 <path d="M1 2h29" stroke="#1b1a19" stroke-width="1.6"/>
 <rect x="1" y="8" width="36" height="12" fill="#117865" stroke="#1b1a19" stroke-width="1.4" stroke-dasharray="2 1.5"/>
 <rect x="1" y="24" width="36" height="12" fill="#117865" stroke="#1b1a19" stroke-width="1.4" stroke-dasharray="2 1.5"/>
</svg>
<svg style="left:1498px;top:317px" width="38" height="38" viewBox="0 0 38 38">
 <path d="M2.6 28V14H11.4M11.4 25V1.8H20.5V17.4M20.5 8.8H30" fill="none" stroke="#1b1a19" stroke-width="1.6"/>
 <path d="M34.2 11.8C30 14 22 20 18.2 23.7L21.8 27.3C25 24 31 17 34.2 11.8z" fill="#f3f2f1" stroke="#1b1a19" stroke-width="1.5" stroke-linejoin="round"/>
 <path d="M16 24.5C12.5 26.5 9.5 31 5.5 32C8 34.2 11 34.8 13.7 34.8C17 34.6 19.8 31 21.8 27.3z" fill="#f3f2f1" stroke="#1b1a19" stroke-width="1.5" stroke-linejoin="round"/>
</svg>
<svg style="left:1594px;top:315px" width="40" height="40" viewBox="0 0 40 40">
 <circle cx="16" cy="16" r="14.5" fill="none" stroke="#1b1a19" stroke-width="1.6"/>
 <path d="M3 14l6-3 5 3 13-8" fill="none" stroke="#1b1a19" stroke-width="1.5"/>
 <path d="M7 18v10M12 19v10M17 20v10M22 17v11M26 15v10" stroke="#1b1a19" stroke-width="1.4"/>
 <path d="M26 27l9 9" stroke="#1b1a19" stroke-width="3"/>
</svg>
<svg style="left:1378px;top:364px" width="270" height="14" viewBox="0 0 270 14">
 <path d="M0 12.5h25l11.5-11 11.5 11H270" fill="none" stroke="#8a8886" stroke-width="1.3"/>
</svg>
<!-- viz grid placeholder -->
<div id="vizgrid"></div>
<svg style="left:1395px;top:394px" width="28" height="28" viewBox="0 0 28 28"><rect x="1.5" y="3.5" width="7" height="6" fill="#fafafa" stroke="#323130" stroke-width="1.4"/><rect x="8.5" y="3.5" width="10.5" height="6" fill="#8cc0f0" stroke="#0f6cbd" stroke-width="1.4"/><rect x="1.5" y="15.5" width="10.5" height="6" fill="#fafafa" stroke="#323130" stroke-width="1.4"/><rect x="12" y="15.5" width="12.5" height="6" fill="#c8c6c4" stroke="#6e6e6e" stroke-width="1.4"/><path d="M1.5 0V27.5H28" fill="none" stroke="#323130" stroke-width="1.8"/></svg>
<svg style="left:1437px;top:394px" width="28" height="28" viewBox="0 0 28 28"><rect x="5.5" y="8.5" width="7" height="10" fill="#8cc0f0" stroke="#0f6cbd" stroke-width="1.4"/><rect x="5.5" y="18.5" width="7" height="9" fill="#fafafa" stroke="#323130" stroke-width="1.4"/><rect x="17.5" y="3.5" width="7" height="12" fill="#c8c6c4" stroke="#6e6e6e" stroke-width="1.4"/><rect x="17.5" y="15.5" width="7" height="12" fill="#fafafa" stroke="#323130" stroke-width="1.4"/><path d="M1.5 0V27.5H28" fill="none" stroke="#323130" stroke-width="1.8"/></svg>
<svg style="left:1479px;top:394px" width="28" height="28" viewBox="0 0 28 28"><rect x="1.5" y="1.5" width="25.5" height="5.5" fill="#8cc0f0" stroke="#0f6cbd" stroke-width="1.4"/><rect x="1.5" y="7" width="16" height="5" fill="#fafafa" stroke="#323130" stroke-width="1.4"/><rect x="1.5" y="14" width="12" height="4.5" fill="#c8c6c4" stroke="#6e6e6e" stroke-width="1.4"/><rect x="1.5" y="18.5" width="20" height="5" fill="#fafafa" stroke="#323130" stroke-width="1.4"/><rect x="1.5" y="24.5" width="12" height="3" fill="#c8c6c4" stroke="#6e6e6e" stroke-width="1"/><path d="M1.5 0V27.5H28" fill="none" stroke="#323130" stroke-width="1.8"/></svg>
<svg style="left:1521px;top:394px" width="28" height="28" viewBox="0 0 28 28"><rect x="3.5" y="1.5" width="5.5" height="26" fill="#8cc0f0" stroke="#0f6cbd" stroke-width="1.4"/><rect x="9" y="11.5" width="5" height="16" fill="#fafafa" stroke="#323130" stroke-width="1.4"/><rect x="14.5" y="15.5" width="5" height="12" fill="#c8c6c4" stroke="#6e6e6e" stroke-width="1.4"/><rect x="19.5" y="7.5" width="5" height="20" fill="#fafafa" stroke="#323130" stroke-width="1.4"/><path d="M1.5 0V27.5H28" fill="none" stroke="#323130" stroke-width="1.8"/></svg>
<svg style="left:1563px;top:394px" width="28" height="28" viewBox="0 0 28 28"><rect x="1.5" y="3.5" width="5" height="6" fill="#fafafa" stroke="#323130" stroke-width="1.4"/><rect x="6.5" y="3.5" width="18" height="6" fill="#8cc0f0" stroke="#0f6cbd" stroke-width="1.4"/><rect x="1.5" y="15.5" width="15.5" height="6" fill="#fafafa" stroke="#323130" stroke-width="1.4"/><rect x="17" y="15.5" width="7.5" height="6" fill="#c8c6c4" stroke="#6e6e6e" stroke-width="1.4"/><path d="M1.5 0V27.5H28" fill="none" stroke="#323130" stroke-width="1.8"/></svg>
<svg style="left:1605px;top:394px" width="28" height="28" viewBox="0 0 28 28"><rect x="5" y="3.5" width="6.5" height="18" fill="#8cc0f0" stroke="#0f6cbd" stroke-width="1.4"/><rect x="5" y="21.5" width="6.5" height="6" fill="#fafafa" stroke="#323130" stroke-width="1.4"/><rect x="18" y="3.5" width="6.5" height="9" fill="#c8c6c4" stroke="#6e6e6e" stroke-width="1.4"/><rect x="18" y="12.5" width="6.5" height="15" fill="#fafafa" stroke="#323130" stroke-width="1.4"/><path d="M1.5 0V27.5H28" fill="none" stroke="#323130" stroke-width="1.8"/></svg>
<svg style="left:1395px;top:436px" width="28" height="28" viewBox="0 0 28 28"><path d="M1.5 0V27.5H28" fill="none" stroke="#323130" stroke-width="1.8"/><path d="M1.5 15L9.5 7 17 14 26.5 5" fill="none" stroke="#323130" stroke-width="1.6"/><path d="M1.5 21.5L17.5 5 26.5 14" fill="none" stroke="#0f6cbd" stroke-width="1.6"/></svg>
<svg style="left:1437px;top:436px" width="28" height="28" viewBox="0 0 28 28"><path d="M1.5 17L9.5 2 16 11" fill="#fafafa" stroke="#323130" stroke-width="1.5"/><path d="M16 11L21.5 1 27 12V27.5z" fill="#c8c6c4" stroke="#6e6e6e" stroke-width="1.3"/><path d="M1.5 17L7.5 22.5 16 11 27 27.5H1.5z" fill="#8cc0f0" stroke="#0f6cbd" stroke-width="1.5"/></svg>
<svg style="left:1479px;top:436px" width="28" height="28" viewBox="0 0 28 28"><path d="M1.5 27.5V15L9.5 22 18.5 13 27 21V27.5z" fill="#fafafa"/><path d="M1.5 6L9.5 13.5 19 3.5 27 9V21L18.5 13 9.5 22 1.5 15z" fill="#8cc0f0" stroke="#0f6cbd" stroke-width="1.5"/><path d="M1.5 0V27.5H28" fill="none" stroke="#323130" stroke-width="1.8"/></svg>
<svg style="left:1521px;top:436px" width="28" height="28" viewBox="0 0 28 28"><path d="M1.5 27.5V14L9.5 22 18 13 27 21V27.5z" fill="#fafafa"/><path d="M1.5 3.5H27V21L18 13 9.5 22 1.5 14z" fill="#8cc0f0" stroke="#0f6cbd" stroke-width="1.5"/><path d="M1.5 0V27.5H28" fill="none" stroke="#323130" stroke-width="1.8"/></svg>
<svg style="left:1563px;top:436px" width="28" height="28" viewBox="0 0 28 28"><rect x="5.5" y="3.5" width="6" height="16" fill="#8cc0f0" stroke="#0f6cbd" stroke-width="1.4"/><rect x="5.5" y="19.5" width="6" height="8" fill="#fafafa" stroke="#323130" stroke-width="1.4"/><rect x="17.5" y="3.5" width="6" height="8" fill="#c8c6c4" stroke="#6e6e6e" stroke-width="1.4"/><rect x="17.5" y="11.5" width="6" height="16" fill="#fafafa" stroke="#323130" stroke-width="1.4"/><path d="M1.5 0V27.5H28" fill="none" stroke="#323130" stroke-width="1.8"/><path d="M1.5 27L9 14.5 16 22 27 12" fill="none" stroke="#323130" stroke-width="1.6"/></svg>
<svg style="left:1605px;top:436px" width="28" height="28" viewBox="0 0 28 28"><rect x="5.5" y="13" width="5" height="14.5" fill="#8cc0f0" stroke="#0f6cbd" stroke-width="1.4"/><rect x="11" y="2" width="5" height="25.5" fill="#fafafa" stroke="#323130" stroke-width="1.4"/><rect x="16.5" y="8" width="5" height="19.5" fill="#c8c6c4" stroke="#6e6e6e" stroke-width="1.4"/><path d="M1.5 0V27.5H28" fill="none" stroke="#323130" stroke-width="1.8"/><path d="M1.5 25L9 14.5 16 21.5 27 10.5" fill="none" stroke="#323130" stroke-width="1.6"/></svg>
<svg style="left:1395px;top:478px" width="28" height="28" viewBox="0 0 28 28"><path d="M3 4C8 4 10 10 14 10S20 3 25.5 3V8C20 8 18 15 14 15S8 9 3 9z" fill="#c8c6c4" stroke="#6e6e6e" stroke-width="1.3"/><rect x="3" y="16" width="22.5" height="6" fill="#e8871e"/><path d="M3 10C8 10 10 17 14 17S20 10 25.5 10V14C20 14 18 21 14 21S8 14 3 14z" fill="#8cc0f0" stroke="#0f6cbd" stroke-width="1.5"/><rect x="9" y="18" width="10" height="2" fill="#f6c27f"/><path d="M1.5 0V27.5H28" fill="none" stroke="#323130" stroke-width="1.8"/></svg>
<svg style="left:1437px;top:478px" width="28" height="28" viewBox="0 0 28 28"><rect x="4.5" y="9.5" width="5" height="18" fill="#fafafa" stroke="#323130" stroke-width="1.4"/><rect x="9.5" y="9.5" width="3.5" height="6.5" fill="#c8c6c4" stroke="#6e6e6e" stroke-width="1.4"/><rect x="13" y="2" width="3.5" height="13" fill="#0f6cbd"/><rect x="16.5" y="2" width="5" height="25.5" fill="#fafafa" stroke="#323130" stroke-width="1.4"/><rect x="21.5" y="2" width="5" height="25.5" fill="#fafafa" stroke="#323130" stroke-width="1.4"/><path d="M1.5 0V27.5H28" fill="none" stroke="#323130" stroke-width="1.8"/></svg>
<svg style="left:1479px;top:478px" width="28" height="28" viewBox="0 0 28 28"><rect x="1" y="1.5" width="26" height="7" fill="#8cc0f0" stroke="#0f6cbd" stroke-width="1.6"/><rect x="4.5" y="8.5" width="19" height="6.5" fill="#8cc0f0" stroke="#0f6cbd" stroke-width="1.6"/><rect x="8.5" y="15" width="11" height="7" fill="#8cc0f0" stroke="#0f6cbd" stroke-width="1.6"/></svg>
<svg style="left:1521px;top:478px" width="28" height="28" viewBox="0 0 28 28"><path d="M1.5 0V27.5H28" fill="none" stroke="#323130" stroke-width="1.8"/><rect x="20" y="1.5" width="4.5" height="4.5" fill="#323130"/><rect x="4.5" y="7" width="4.5" height="4.5" fill="#8cc0f0"/><rect x="12" y="11.5" width="4.5" height="4.5" fill="#8cc0f0"/><rect x="4.5" y="18" width="4.5" height="4.5" fill="#323130"/><rect x="20" y="17.5" width="4.5" height="4.5" fill="#8cc0f0"/></svg>
<svg style="left:1563px;top:478px" width="28" height="28" viewBox="0 0 28 28"><circle cx="14" cy="13.5" r="13" fill="#fafafa" stroke="#323130" stroke-width="1.5"/><path d="M14 13.5V0.5A13 13 0 0 1 22.5 23.3z" fill="#8cc0f0" stroke="#0f6cbd" stroke-width="1.5"/></svg>
<svg style="left:1605px;top:478px" width="28" height="28" viewBox="0 0 28 28"><circle cx="14" cy="13.5" r="12.5" fill="#fafafa" stroke="#6e6e6e" stroke-width="1.2"/><circle cx="14" cy="13.5" r="6" fill="#f3f2f1" stroke="#6e6e6e" stroke-width="1.2"/><path d="M14 1A12.5 12.5 0 1 1 1.5 14.5H8A6 6 0 1 0 14 7.5z" fill="#8cc0f0" stroke="#0f6cbd" stroke-width="1.6"/></svg>
<svg style="left:1395px;top:520px" width="28" height="28" viewBox="0 0 28 28"><rect x="1.5" y="1.5" width="25.5" height="26" fill="#fafafa" stroke="#323130" stroke-width="1.6"/><rect x="2" y="2" width="12" height="25" fill="#8cc0f0"/><path d="M14 1.5V27.5M1.5 14.5H14M14 9H27M19.5 9V27.5M19.5 18H27" stroke="#0f6cbd" stroke-width="1.3"/><path d="M14 9H27M19.5 9V27.5M19.5 18H27" stroke="#323130" stroke-width="1.3"/><rect x="1.5" y="1.5" width="12.5" height="26" fill="none" stroke="#0f6cbd" stroke-width="1.6"/></svg>
<svg style="left:1437px;top:520px" width="28" height="28" viewBox="0 0 28 28"><circle cx="12" cy="12" r="9" fill="#fafafa" stroke="#323130" stroke-width="1.3"/><path d="M7 7c2-2 5-1 5 1s-3 2-4 4-2 2-3 0zM13 13c3-1 5 0 5 2s-2 4-4 4-2-3-1-6z" fill="#2f8f3f"/><path d="M15 6c1 0 3 1 3 3-1 0-3-1-3-3z" fill="#2f8f3f"/><path d="M4 3A12 12 0 0 0 20 22" fill="none" stroke="#323130" stroke-width="1.5"/><path d="M12 23v3M3 27h18" stroke="#323130" stroke-width="1.6"/></svg>
<svg style="left:1479px;top:520px" width="28" height="28" viewBox="0 0 28 28"><path d="M1.5 3L13.5 2 15.5 4H27V20L24 24 17 25.5 14 27 8 25 2 18 1 13z" fill="#c8c6c4" stroke="#323130" stroke-width="1.4"/><path d="M1.5 3H9L12 6 10 10 13.5 13 3 14z" fill="#8cc0f0" stroke="#0f6cbd" stroke-width="1.5"/><path d="M15 14H27V20L24 24 17 25.5 14 24 15 19z" fill="#8cc0f0" stroke="#0f6cbd" stroke-width="1.5"/></svg>
<div class="a" style="left:1517px;top:516px;width:36px;height:36px;border:1px solid #1b1a19;background:#fafafa"></div>
<svg style="left:1521px;top:520px" width="28" height="28" viewBox="0 0 28 28"><path d="M23 1.5L5 25.5 18.5 18 24.5 27z" fill="#50b0e0"/><path d="M23 1.5L16 19 24.5 27z" fill="#1e90d6"/><path d="M18.5 18L24.5 27 16 19z" fill="#0f6cbd"/></svg>
<svg style="left:1563px;top:520px" width="28" height="28" viewBox="0 0 28 28"><path d="M1.5 21A12.5 12.5 0 0 1 26.5 21H22A8 8 0 0 0 6 21z" fill="#fafafa" stroke="#323130" stroke-width="1.5"/><path d="M9 9.5A12.5 12.5 0 0 1 26.5 21H22A8 8 0 0 0 11.5 13.5z" fill="#8cc0f0" stroke="#0f6cbd" stroke-width="1.6"/><path d="M12 20L20 14" stroke="#323130" stroke-width="2.2"/></svg>
<svg style="left:1605px;top:520px" width="28" height="28" viewBox="0 0 28 28"><rect x="1.5" y="4" width="25.5" height="19.5" fill="#fafafa" stroke="#323130" stroke-width="1.6"/><text x="4" y="17" font-family="Liberation Sans" font-size="10.5" fill="#2b88d8">123</text><path d="M4 20.5H24" stroke="#6e6e6e" stroke-width="1"/></svg>
<svg style="left:1395px;top:562px" width="28" height="28" viewBox="0 0 28 28"><rect x="1.5" y="1.5" width="25.5" height="26" fill="#fafafa" stroke="#323130" stroke-width="1.6"/><path d="M6 5V23" stroke="#6e6e6e" stroke-width="1"/><path d="M8 7.5H23M8 16.5H23" stroke="#0f6cbd" stroke-width="2.4"/><path d="M8 11.5H14M8 20.5H14" stroke="#6e6e6e" stroke-width="1.3"/></svg>
<svg style="left:1437px;top:562px" width="28" height="28" viewBox="0 0 28 28"><rect x="1.5" y="3" width="25.5" height="21" fill="#fafafa" stroke="#323130" stroke-width="1.6"/><path d="M5 14.5L8.5 8 12 14.5z" fill="#a6e3a9" stroke="#2f8f3f" stroke-width="1.2"/><path d="M14.5 8H23L18.8 14.5z" fill="#f4a0a0" stroke="#d13438" stroke-width="1.2"/><path d="M4 19H24" stroke="#6e6e6e" stroke-width="1"/></svg>
<svg style="left:1479px;top:562px" width="28" height="28" viewBox="0 0 28 28"><path d="M15 27.5H1.5V1.5H27V13" fill="#fafafa" stroke="#323130" stroke-width="1.6"/><rect x="2.3" y="2.3" width="24" height="2.8" fill="#c8c6c4"/><rect x="5" y="10" width="4" height="4" fill="#fafafa" stroke="#6e6e6e" stroke-width="1.2"/><rect x="5" y="18" width="4" height="4" fill="#fafafa" stroke="#6e6e6e" stroke-width="1.2"/><path d="M14.5 14.5H28L23.5 19.5V28H19V19.5z" fill="#fafafa" stroke="#323130" stroke-width="1.6"/></svg>
<svg style="left:1521px;top:562px" width="28" height="28" viewBox="0 0 28 28"><rect x="1.5" y="1.5" width="25.5" height="26" fill="#fafafa" stroke="#323130" stroke-width="1.6"/><rect x="2.3" y="2.3" width="24" height="3" fill="#c8c6c4"/><path d="M1.5 5.5H27M1.5 12.5H27M1.5 19.5H27M10 5.5V27.5M18 5.5V27.5" stroke="#6e6e6e" stroke-width="1.3"/></svg>
<svg style="left:1563px;top:562px" width="28" height="28" viewBox="0 0 28 28"><rect x="1.5" y="1.5" width="25.5" height="26" fill="#fafafa" stroke="#323130" stroke-width="1.6"/><rect x="2.3" y="2.3" width="24" height="3" fill="#c8c6c4"/><rect x="18" y="5.5" width="8.5" height="21.5" fill="#8cc0f0"/><rect x="2" y="19.5" width="24.5" height="7.5" fill="#8cc0f0"/><path d="M1.5 5.5H27M1.5 12.5H27M1.5 19.5H27M10 5.5V27.5M18 5.5V27.5" stroke="#0f6cbd" stroke-width="1.2"/><path d="M1.5 5.5H18M1.5 12.5H18M10 5.5V19.5" stroke="#6e6e6e" stroke-width="1.3"/><rect x="1.5" y="1.5" width="25.5" height="26" fill="none" stroke="#323130" stroke-width="1.6"/></svg>
<svg style="left:1605px;top:562px" width="28" height="28" viewBox="0 0 28 28"><text x="5.7" y="22.8" font-family="Liberation Sans" font-weight="bold" font-size="23.5" fill="#2b88d8" textLength="14" lengthAdjust="spacingAndGlyphs">R</text></svg>
<svg style="left:1395px;top:604px" width="28" height="28" viewBox="0 0 28 28"><text x="-0.6" y="19.5" font-family="Liberation Sans" font-weight="bold" font-size="24" fill="#2b88d8" textLength="28" lengthAdjust="spacingAndGlyphs">Py</text></svg>
<svg style="left:1437px;top:604px" width="28" height="28" viewBox="0 0 28 28"><path d="M1.5 0V27.5H28" fill="none" stroke="#323130" stroke-width="1.8"/><path d="M1.5 5H22M1.5 12.5H16M1.5 19H10.5" stroke-width="1.4" fill="none" stroke="#0f6cbd"/><path d="M1.5 12.5H16M1.5 19H10.5" stroke="#6e6e6e" stroke-width="1.4"/><circle cx="22" cy="5" r="3" fill="#8cc0f0" stroke="#0f6cbd" stroke-width="1.4"/><circle cx="16" cy="12.5" r="2" fill="#c8c6c4" stroke="#6e6e6e" stroke-width="1.2"/><circle cx="10.5" cy="19" r="2" fill="#c8c6c4" stroke="#6e6e6e" stroke-width="1.2"/></svg>
<svg style="left:1479px;top:604px" width="28" height="28" viewBox="0 0 28 28"><path d="M11 12.5H15M15 4.5V24.5M15 4.5H17M15 12.5H17M15 24.5H17" stroke="#323130" stroke-width="1.4" fill="none"/><rect x="1" y="10" width="10" height="5.5" fill="#8cc0f0" stroke="#0f6cbd" stroke-width="1.5"/><rect x="17" y="1.5" width="9.5" height="5" fill="#8cc0f0" stroke="#0f6cbd" stroke-width="1.5"/><rect x="17" y="9.5" width="9.5" height="5.5" fill="#8cc0f0" stroke="#0f6cbd" stroke-width="1.5"/><rect x="17" y="18.5" width="9.5" height="6" fill="#8cc0f0" stroke="#0f6cbd" stroke-width="1.5"/></svg>
<svg style="left:1521px;top:604px" width="28" height="28" viewBox="0 0 28 28"><path d="M1.5 2H27V20H9.5L5.5 26V20H1.5z" fill="#fafafa" stroke="#0f6cbd" stroke-width="1.6" stroke-linejoin="round"/></svg>
<svg style="left:1563px;top:604px" width="28" height="28" viewBox="0 0 28 28"><path d="M3 1.5H17L22.5 7V27.5H3z" fill="#fafafa" stroke="#323130" stroke-width="1.5"/><path d="M17 1.5V7H22.5" fill="none" stroke="#323130" stroke-width="1.2"/><circle cx="3" cy="11.5" r="2.4" fill="#8cc0f0" stroke="#0f6cbd" stroke-width="1.2"/><path d="M9 12.5H19M7 17H14" stroke="#0f6cbd" stroke-width="1.4"/></svg>
<svg style="left:1605px;top:604px" width="28" height="28" viewBox="0 0 28 28"><path d="M6 5C2 5 1 7 1.5 10 2 13 5 15 8 15M22 5C26 5 27 7 26.5 10 26 13 23 15 20 15" fill="none" stroke="#323130" stroke-width="1.6"/><path d="M6 1.5H22V12C22 16 18 18 14 18S6 16 6 12z" fill="#fafafa" stroke="#323130" stroke-width="1.6"/><rect x="6" y="1.5" width="16" height="3" fill="#8cc0f0" stroke="#0f6cbd" stroke-width="1.2"/><path d="M14 18V22" stroke="#323130" stroke-width="1.6"/><path d="M9 22.5H19V26H9z" fill="#8cc0f0" stroke="#0f6cbd" stroke-width="1.5"/><path d="M10.5 22.5C11 20 17 20 17.5 22.5" fill="none" stroke="#323130" stroke-width="1.3"/></svg>
<svg style="left:1395px;top:645px" width="28" height="28" viewBox="0 0 28 28"><path d="M2 1.5H15.5L22.5 8.5V28H2z" fill="#fafafa" stroke="#323130" stroke-width="1.6"/><path d="M15.5 1.5V8.5H22.5" fill="none" stroke="#323130" stroke-width="1.2"/><rect x="6" y="17" width="3.5" height="8" fill="#323130"/><rect x="11" y="20.5" width="3.5" height="4.5" fill="#323130"/><rect x="16" y="13.5" width="3.5" height="11.5" fill="#323130"/></svg>
<svg style="left:1437px;top:645px" width="28" height="28" viewBox="0 0 28 28"><rect x="2.5" y="5" width="25" height="18" fill="#fafafa" stroke="#323130" stroke-width="1.6"/><text x="6" y="17.5" font-family="Liberation Sans" font-size="10.5" fill="#2b88d8">123</text><path d="M4.5 20.5H25" stroke="#6e6e6e" stroke-width="1"/><path d="M6 0H12.5L9 6H12L3 17 6 9H2z" fill="#fbb034" stroke="#e26b0a" stroke-width="1"/></svg>
<svg style="left:1479px;top:645px" width="28" height="28" viewBox="0 0 28 28"><rect x="15.5" y="1.5" width="10.5" height="10.5" fill="#fafafa" stroke="#6e6e6e" stroke-width="1.4"/><rect x="2" y="15" width="10.5" height="11" fill="#fafafa" stroke="#6e6e6e" stroke-width="1.4"/><rect x="9" y="7" width="3.5" height="5" fill="#8cc0f0" stroke="#0f6cbd" stroke-width="1.2"/><path d="M13.5 14.5H28L23.5 19.5V28H19V19.5z" fill="#fafafa" stroke="#323130" stroke-width="1.6"/><path d="M6 0H12.5L9 6H12L3 17 6 9H2z" fill="#fbb034" stroke="#e26b0a" stroke-width="1"/></svg>
<svg style="left:1521px;top:645px" width="28" height="28" viewBox="0 0 28 28"><path d="M8 2H27V19" fill="none" stroke="#0f6cbd" stroke-width="2"/><path d="M11 9L20 6 21 11 16 14 17 22 27 19 25 26H2V19H9z" fill="#8cc0f0"/><path d="M2 20V27.5H17" fill="none" stroke="#0f6cbd" stroke-width="2"/><path d="M2 0H8V11L5 15 2 11z" fill="#d8690f"/><circle cx="5" cy="4.5" r="1.2" fill="#fff"/><circle cx="23.5" cy="23.5" r="4" fill="#d8690f"/><circle cx="26" cy="16" r="2.2" fill="#d8690f"/></svg>
<svg style="left:1563px;top:645px" width="28" height="28" viewBox="0 0 28 28"><path d="M14 1.5L26 13.5 14 25.5 1.5 13.5z" fill="#fafafa" stroke="#9b4fc2" stroke-width="1.4"/><path d="M12 1.5L24 13.5 12 25.5" fill="none" stroke="#9b4fc2" stroke-width="1.4"/><path d="M7.5 7.5L19.5 19.5M19 7.5L7.5 19" fill="none" stroke="#9b4fc2" stroke-width="1.4"/></svg>
<svg style="left:1605px;top:645px" width="28" height="28" viewBox="0 0 28 28"><path d="M1.5 2H20L27 13 20 24H1.5L8.5 13z" fill="#fafafa" stroke="#0078d4" stroke-width="1.5"/><path d="M8.5 24L20 2M14 24L20.5 13" fill="none" stroke="#0078d4" stroke-width="1.5"/></svg>
<svg style="left:1398px;top:694px" width="24" height="8" viewBox="0 0 24 8"><circle cx="3" cy="4" r="1.6" fill="#252423"/><circle cx="11" cy="4" r="1.6" fill="#252423"/><circle cx="19" cy="4" r="1.6" fill="#252423"/></svg>
<div class="a" style="left:1379px;top:729px;width:270px;height:1px;background:#d2d0ce"></div>
<div class="a" style="left:1641px;top:733px;width:7px;height:108px;border-radius:4px;background:#8a8886"></div>
<div class="t well" style="left:1397px;top:745px">Ubicación</div>
<div class="a" style="left:1386px;top:776px;width:254px;height:51px;border:1px dashed #c8c6c4;background:#fff;border-radius:3px"></div>
<div class="a" style="left:1389px;top:779px;width:247px;height:34px;border:1px solid #c8c6c4;background:#eaeaea;border-radius:3px"></div>
<div class="t" style="left:1397px;top:787px;font-size:17px;color:#252423">Estado</div>
<svg style="left:1589px;top:789px" width="42" height="14" viewBox="0 0 42 14">
 <path d="M1.5 2.5l8 8 8-8" fill="none" stroke="#1b1a19" stroke-width="1.4"/>
 <path d="M28 1.5l11 11M39 1.5L28 12.5" fill="none" stroke="#1b1a19" stroke-width="1.4"/>
</svg>
<div class="t well" style="left:1397px;top:845px">Latitud</div>
<div class="a" style="left:1386px;top:876px;width:254px;height:41px;border:1px dashed #c8c6c4;background:#fff;border-radius:3px"></div>
<div class="t" style="left:1401px;top:886px;font-size:17.6px;color:#323130">Agregar campos de datos a...</div>
<div class="t well" style="left:1397px;top:935px">Longitud</div>
<div class="a" style="left:1386px;top:966px;width:254px;height:41px;border:1px dashed #c8c6c4;background:#fff;border-radius:3px"></div>
<div class="t" style="left:1401px;top:976px;font-size:17.6px;color:#323130">Agregar campos de datos a...</div>
<div class="t well" style="left:1397px;top:1025px">Leyenda</div>

<!-- DATOS PANE -->
<div class="t" style="left:1662px;top:243.5px;font-size:22px;font-weight:bold;color:#252423">Datos</div>
<div class="a" style="left:1657px;top:293px;width:240px;height:34px;border:1px solid #c8c6c4;border-bottom:1.5px solid #605e5c;background:#fff;border-radius:5px"></div>
<svg style="left:1675px;top:299px" width="22" height="22" viewBox="0 0 22 22">
 <circle cx="9" cy="9" r="7.5" fill="none" stroke="#323130" stroke-width="1.5"/>
 <path d="M14.5 14.5l6 6" stroke="#323130" stroke-width="1.5"/>
</svg>
<div class="t" style="left:1706px;top:302px;font-size:19.6px;color:#605e5c">Buscar</div>

<svg style="left:1673px;top:350px" width="12" height="20" viewBox="0 0 12 20"><path d="M2 1.5l8 8.5-8 8.5" fill="none" stroke="#323130" stroke-width="1.5"/></svg>
<svg style="left:1692px;top:350px" width="32" height="32" viewBox="0 0 32 32">
 <rect x="2.5" y="1.5" width="17" height="17" rx="3.5" fill="none" stroke="#1b1a19" stroke-width="1.5"/>
 <path d="M2.5 7.2h17M2.5 12.8h17M8.2 1.5v17M13.8 1.5v17" stroke="#1b1a19" stroke-width="1.4"/>
 <circle cx="19.8" cy="19" r="9" fill="#117865" stroke="#f3f2f1" stroke-width="1"/>
 <path d="M16.3 19.2l2.5 2.5 4.5-4.8" fill="none" stroke="#fff" stroke-width="1.8"/>
</svg>
<div class="t" style="left:1720px;top:352.5px;font-size:17.3px;color:#252423">Tabla Empleados</div>
<svg style="left:1673px;top:386px" width="12" height="20" viewBox="0 0 12 20"><path d="M2 1.5l8 8.5-8 8.5" fill="none" stroke="#323130" stroke-width="1.5"/></svg>
<svg style="left:1692px;top:386px" width="32" height="32" viewBox="0 0 32 32">
 <rect x="2.5" y="1.5" width="17" height="17" rx="3.5" fill="none" stroke="#1b1a19" stroke-width="1.5"/>
 <path d="M2.5 7.2h17M2.5 12.8h17M8.2 1.5v17M13.8 1.5v17" stroke="#1b1a19" stroke-width="1.4"/>
 <circle cx="19.8" cy="19" r="9" fill="#117865" stroke="#f3f2f1" stroke-width="1"/>
 <path d="M16.3 19.2l2.5 2.5 4.5-4.8" fill="none" stroke="#fff" stroke-width="1.8"/>
</svg>
<div class="t" style="left:1720px;top:388.5px;font-size:17.3px;color:#252423">Tabla Evaluacion</div>
<svg style="left:1673px;top:422px" width="12" height="20" viewBox="0 0 12 20"><path d="M2 1.5l8 8.5-8 8.5" fill="none" stroke="#323130" stroke-width="1.5"/></svg>
<svg style="left:1692px;top:422px" width="32" height="32" viewBox="0 0 32 32">
 <rect x="2.5" y="1.5" width="17" height="17" rx="3.5" fill="none" stroke="#1b1a19" stroke-width="1.5"/>
 <path d="M2.5 7.2h17M2.5 12.8h17M8.2 1.5v17M13.8 1.5v17" stroke="#1b1a19" stroke-width="1.4"/>
 <circle cx="19.8" cy="19" r="9" fill="#117865" stroke="#f3f2f1" stroke-width="1"/>
 <path d="M16.3 19.2l2.5 2.5 4.5-4.8" fill="none" stroke="#fff" stroke-width="1.8"/>
</svg>
<div class="t" style="left:1720px;top:424.5px;font-size:17.3px;color:#252423">Tabla Sueldo</div>
<!-- PAGE BAR -->
<div class="a" style="left:252px;top:1023px;width:1px;height:22px;background:#8a8886"></div>
<div class="a" style="left:253px;top:1023px;width:127px;height:22px;background:#fff"></div>
<div class="a" style="left:381px;top:1023px;width:59px;height:22px;background:#117865"></div>
<div class="a" style="left:409px;top:1040px;width:2px;height:5px;background:#fff"></div>
<div class="a" style="left:79px;top:1034px;width:29px;height:14px;border:1.5px solid #323130;border-radius:2px"></div>
<div class="a" style="left:151px;top:1029px;width:18px;height:20px;border:1.5px solid #323130;border-radius:2px"></div>
<svg style="left:200px;top:1036px" width="40" height="9" viewBox="0 0 40 9"><path d="M8 1L3 8M33 1l5 7" fill="none" stroke="#c8c6c4" stroke-width="1.4"/></svg>
<div class="t" style="left:281px;top:1042px;font-size:17px;font-weight:bold;color:#252423">Página 1</div>

<div class="a" style="left:0;top:224px;width:1878px;height:7px;background:linear-gradient(rgba(0,0,0,0.12),rgba(0,0,0,0.04) 50%,rgba(0,0,0,0))"></div>
</body></html>
